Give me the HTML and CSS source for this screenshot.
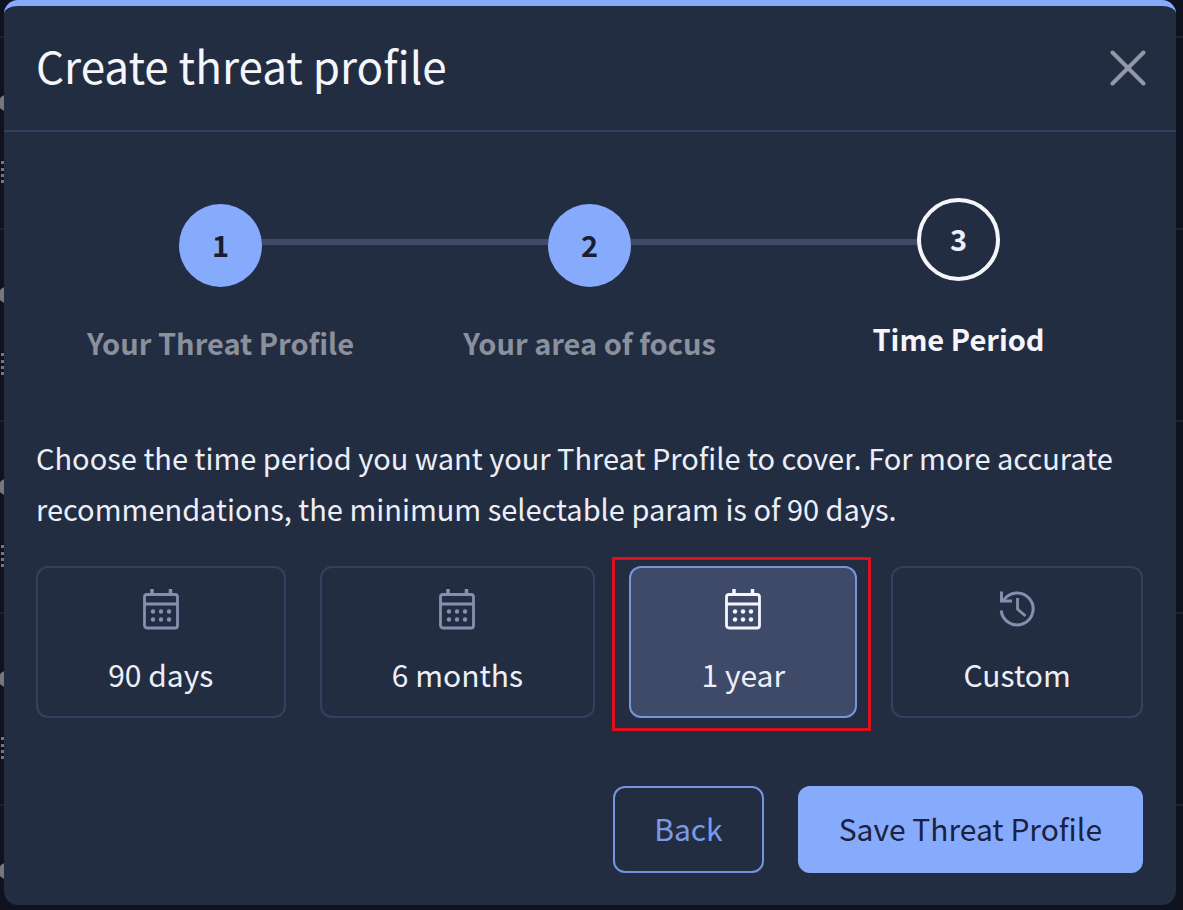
FILE: index.html
```html
<!DOCTYPE html>
<html lang="en">
<head>
<meta charset="utf-8">
<meta name="viewport" content="width=device-width, initial-scale=1">
<title>Create threat profile</title>
<link rel="stylesheet" href="styles.css">
</head>
<body>
<svg class="sprite" aria-hidden="true">
  <symbol id="calendar" viewBox="0 0 36 42">
    <g fill="none" stroke="currentColor" stroke-width="2.8">
      <rect x="1.5" y="6.5" width="33" height="33.5" rx="2.5"/>
      <path d="M1.5 16H34.5" stroke-width="3"/>
      <path d="M9 1V7M27.500 1V7" stroke-width="3.5"/>
    </g>
    <g fill="currentColor">
      <circle cx="10" cy="23.500" r="2.2"/><circle cx="18" cy="23.500" r="2.2"/><circle cx="26" cy="23.500" r="2.2"/>
      <circle cx="10" cy="31.500" r="2.2"/><circle cx="18" cy="31.500" r="2.2"/><circle cx="26" cy="31.500" r="2.2"/>
    </g>
  </symbol>
  <symbol id="history" viewBox="0 0 36 42">
    <g fill="none" stroke="currentColor" stroke-width="3">
      <path d="M2.200 22.500A16 16 0 1 0 4.500 12.500"/>
      <path d="M2.500 3.500V13H13"/>
      <path d="M18.500 10V21L26.500 28" stroke-width="2.800"/>
    </g>
  </symbol>
</svg>

<div class="backdrop" aria-hidden="true">
  <div class="row"></div><div class="row"></div><div class="row"></div><div class="row"></div><div class="row"></div><div class="row"></div>
</div>

<main class="modal" role="dialog" aria-labelledby="title">
  <header class="modal-header">
    <h1 class="title" id="title">Create threat profile</h1>
    <button class="close" type="button" aria-label="Close">
      <svg class="close-icon" viewBox="0 0 36 36"><path d="M2.500 2.500L33.500 33.500M33.500 2.500L2.500 33.500" fill="none" stroke="currentColor" stroke-width="4" stroke-linecap="round"/></svg>
    </button>
  </header>

  <div class="modal-body">
    <ol class="steps">
      <li class="step"><span class="number">1</span><span class="label">Your Threat Profile</span></li>
      <li class="step"><span class="number">2</span><span class="label">Your area of focus</span></li>
      <li class="step active" aria-current="step"><span class="number">3</span><span class="label">Time Period</span></li>
    </ol>

    <p class="intro">Choose the time period you want your Threat Profile to cover. For more accurate recommendations, the minimum selectable param is of 90 days.</p>

    <div class="periods">
      <button class="period" type="button"><svg class="icon"><use href="#calendar"/></svg><span>90 days</span></button>
      <button class="period" type="button"><svg class="icon"><use href="#calendar"/></svg><span>6 months</span></button>
      <button class="period selected" type="button" aria-pressed="true"><svg class="icon"><use href="#calendar"/></svg><span>1 year</span></button>
      <button class="period" type="button"><svg class="icon"><use href="#history"/></svg><span>Custom</span></button>
    </div>

    <footer class="actions">
      <button class="button" type="button">Back</button>
      <button class="button primary" type="button">Save Threat Profile</button>
    </footer>
  </div>
</main>
</body>
</html>
```
FILE: styles.css
```css
*,
*::before,
*::after {
  box-sizing: border-box;
}

body {
  margin: 0;
  min-height: 100vh;
  padding: 0 7px 5px 4px;
  background: #10131f;
  color: #eceff8;
  font-family: "Noto Sans CJK SC", "Noto Sans", sans-serif;
  font-size: 30px;
  line-height: 51px;
}

button {
  font: inherit;
  color: inherit;
  cursor: pointer;
}

.sprite {
  position: absolute;
  width: 0;
  height: 0;
}

/* Dimmed table rows behind the dialog */
.backdrop {
  position: absolute;
  inset: 0;
  overflow: hidden;
  z-index: -1;
}

.row {
  position: relative;
  height: 192px;
  border-bottom: 2px solid #1e2130;
}

.row:first-child {
  height: 38px;
}

.row::before,
.row::after {
  content: "";
  position: absolute;
  left: -1px;
  top: 57px;
  width: 14px;
  height: 16px;
  border-radius: 8px;
  background: #77777c;
}

.row::after {
  left: 1px;
  top: 123px;
  width: 6px;
  height: 22px;
  border: 3px dotted #77777c;
  border-radius: 0;
  background: none;
}

.row:first-child::before,
.row:first-child::after {
  display: none;
}

.modal {
  border-top: 6px solid #87abfc;
  border-radius: 14px;
  background: #232d42;
}

.modal-header {
  display: flex;
  align-items: center;
  justify-content: space-between;
  height: 126px;
  padding: 0 30px 0 32px;
  border-bottom: 2px solid #354060;
}

.title {
  margin: 0;
  padding-bottom: 6px;
  font-size: 44px;
  font-weight: 400;
  line-height: 64px;
  color: #f4f6fc;
}

.close {
  display: flex;
  padding: 0;
  border: 0;
  background: none;
  color: #9298a5;
}

.close-icon {
  width: 36px;
  height: 36px;
}

.modal-body {
  padding: 66px 33px 32px 32px;
}

.steps {
  display: grid;
  grid-template-columns: repeat(3, 1fr);
  margin: 0 0 64px;
  padding: 0;
  list-style: none;
}

.step {
  position: relative;
  display: flex;
  flex-direction: column;
  align-items: center;
  gap: 30px;
  padding-top: 6px;
  color: #8b909d;
  font-size: 29px;
  font-weight: 700;
}

.step + .step::before {
  content: "";
  position: absolute;
  top: 41px;
  left: -50%;
  width: 100%;
  height: 6px;
  background: #3e4a68;
}

.number {
  position: relative;
  z-index: 1;
  display: flex;
  align-items: center;
  justify-content: center;
  width: 83px;
  height: 83px;
  padding-bottom: 2px;
  border-radius: 50%;
  background: #87abfc;
  color: #1b1d33;
}

.step.active {
  gap: 32px;
  padding-top: 0;
  color: #f4f6fc;
}

.active .number {
  border: 4px solid #f4f6fc;
  background: #232d42;
  color: #eceff8;
}

.intro {
  margin: 0 0 32px;
  font-size: 29px;
}

.periods {
  display: flex;
  gap: 34px;
}

.period {
  position: relative;
  display: flex;
  flex: 1 1 auto;
  flex-direction: column;
  align-items: center;
  gap: 19px;
  height: 152px;
  padding: 20px 0 0;
  border: 2px solid #354060;
  border-radius: 12px;
  background: none;
}

.icon {
  width: 36px;
  height: 42px;
  color: #8590b0;
}

.selected {
  border-color: #7595df;
  background: #3e4a68;
}

.selected .icon {
  color: #f4f6fc;
}

/* Highlight frame around the chosen period */
.selected::after {
  content: "";
  position: absolute;
  inset: -11px -16px -15px -19px;
  border: 3px solid #e01018;
}

.actions {
  display: flex;
  justify-content: flex-end;
  gap: 34px;
  margin-top: 68px;
}

.button {
  height: 87px;
  padding: 0 39px 2px;
  border: 2px solid #7595df;
  border-radius: 12px;
  background: none;
  color: #7b9bea;
}

.primary {
  border-color: #87abfc;
  background: #87abfc;
  color: #1b2240;
}
```
